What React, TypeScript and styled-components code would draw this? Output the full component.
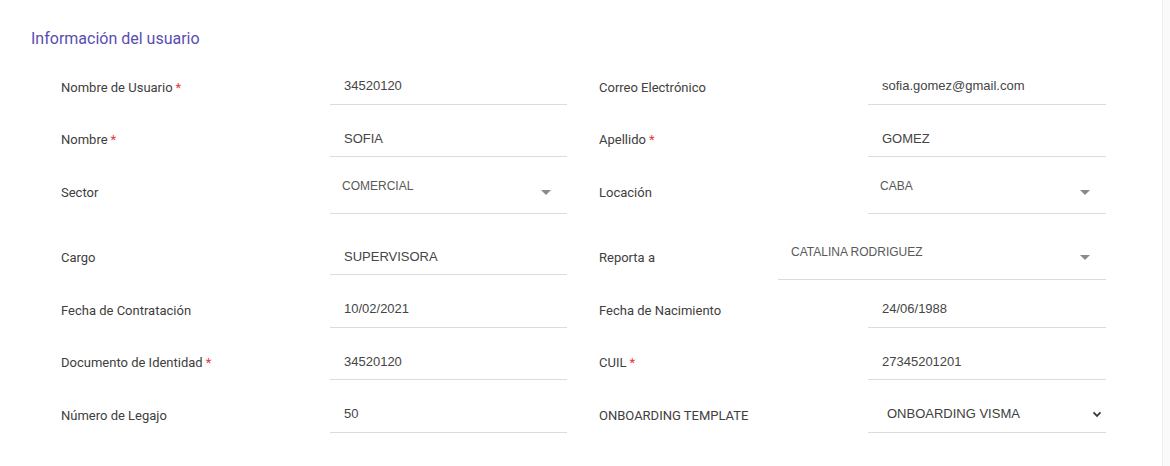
import React from "react";
import styled, { createGlobalStyle } from "styled-components";

const GlobalStyle = createGlobalStyle`
  html, body {
    margin: 0;
    padding: 0;
    background: #ffffff;
    font-family: Roboto, "Liberation Sans", Arial, sans-serif;
  }
`;

const fieldFont = `"Liberation Sans", Arial, sans-serif`;

const Page = styled.div`
  display: flex;
  width: 1170px;
  height: 466px;
  overflow: hidden;
  background: #ffffff;
`;

const Content = styled.div`
  flex: 1;
  padding: 28px 0 0 31px;
`;

const ScrollTrack = styled.div`
  width: 7px;
  border-left: 1px solid #ededed;
  background: #fafafa;
`;

const Title = styled.h2`
  margin: 0;
  font-size: 16px;
  line-height: 22px;
  font-weight: 400;
  color: #5a4db2;
`;

const Form = styled.div`
  margin-top: 11px;
  padding-left: 30px;
  display: flex;
  flex-direction: column;
`;

const Row = styled.div<{ $top?: number }>`
  display: grid;
  grid-template-columns: 506px 507px;
  column-gap: 32px;
  height: 52.5px;
  margin-top: ${(p) => p.$top ?? 0}px;
  align-items: center;
`;

const Field = styled.div`
  display: grid;
  grid-template-columns: 269px 1fr;
  align-items: center;
`;

const Label = styled.label`
  font-size: 13px;
  color: #404040;
`;

const Required = styled.span`
  color: #e53935;
  margin-left: 3px;
`;

const TextInput = styled.input`
  box-sizing: border-box;
  width: 100%;
  height: 35px;
  padding: 0 14px 2px;
  border: none;
  border-bottom: 1px solid #dcdcdc;
  outline: none;
  background: transparent;
  font-family: ${fieldFont};
  font-size: 13px;
  color: #454545;
`;

const SelectBox = styled.div<{ $wide?: boolean }>`
  position: relative;
  box-sizing: border-box;
  height: 44px;
  margin-left: ${(p) => (p.$wide ? "-90px" : "0")};
  padding: 8px 40px 0 ${(p) => (p.$wide ? "13px" : "12px")};
  border-bottom: 1px solid #dcdcdc;
  font-family: ${fieldFont};
  font-size: 12px;
  line-height: 16px;
  color: #595959;
`;

const Caret = styled.span`
  position: absolute;
  right: 16px;
  top: 50%;
  margin-top: -2px;
  width: 0;
  height: 0;
  border-left: 5px solid transparent;
  border-right: 5px solid transparent;
  border-top: 5px solid #8a8a8a;
`;

const NativeSelect = styled.div`
  box-sizing: border-box;
  height: 35px;
  display: flex;
  align-items: center;
  justify-content: space-between;
  padding: 0 4px 2px 19px;
  border-bottom: 1px solid #dcdcdc;
  font-family: ${fieldFont};
  font-size: 13px;
  color: #404040;
`;

const Chevron = () => (
  <svg width="10" height="10" viewBox="0 0 10 10">
    <path d="M1.5 3.4 L5 6.9 L8.5 3.4" fill="none" stroke="#3a3a3a" strokeWidth="1.8" />
  </svg>
);

type Kind = "text" | "select" | "wideSelect" | "native";

interface FieldDef {
  label: string;
  value: string;
  required?: boolean;
  kind?: Kind;
}

const rows: { top?: number; fields: [FieldDef, FieldDef] }[] = [
  {
    fields: [
      { label: "Nombre de Usuario", value: "34520120", required: true },
      { label: "Correo Electrónico", value: "sofia.gomez@gmail.com" },
    ],
  },
  {
    fields: [
      { label: "Nombre", value: "SOFIA", required: true },
      { label: "Apellido", value: "GOMEZ", required: true },
    ],
  },
  {
    fields: [
      { label: "Sector", value: "COMERCIAL", kind: "select" },
      { label: "Locación", value: "CABA", kind: "select" },
    ],
  },
  {
    top: 13,
    fields: [
      { label: "Cargo", value: "SUPERVISORA" },
      { label: "Reporta a", value: "CATALINA RODRIGUEZ", kind: "wideSelect" },
    ],
  },
  {
    fields: [
      { label: "Fecha de Contratación", value: "10/02/2021" },
      { label: "Fecha de Nacimiento", value: "24/06/1988" },
    ],
  },
  {
    fields: [
      { label: "Documento de Identidad", value: "34520120", required: true },
      { label: "CUIL", value: "27345201201", required: true },
    ],
  },
  {
    fields: [
      { label: "Número de Legajo", value: "50" },
      { label: "ONBOARDING TEMPLATE", value: "ONBOARDING VISMA", kind: "native" },
    ],
  },
];

const Control: React.FC<{ field: FieldDef }> = ({ field }) => {
  switch (field.kind) {
    case "select":
    case "wideSelect":
      return (
        <SelectBox $wide={field.kind === "wideSelect"}>
          {field.value}
          <Caret />
        </SelectBox>
      );
    case "native":
      return (
        <NativeSelect>
          <span>{field.value}</span>
          <Chevron />
        </NativeSelect>
      );
    default:
      return <TextInput readOnly value={field.value} />;
  }
};

const App: React.FC = () => {
  return (
    <Page>
      <GlobalStyle />
      <Content>
        <Title>Información del usuario</Title>
        <Form>
          {rows.map((row, i) => (
            <Row key={i} $top={row.top}>
              {row.fields.map((f) => (
                <Field key={f.label}>
                  <Label>
                    {f.label}
                    {f.required && <Required>*</Required>}
                  </Label>
                  <Control field={f} />
                </Field>
              ))}
            </Row>
          ))}
        </Form>
      </Content>
      <ScrollTrack />
    </Page>
  );
};

export default App;
